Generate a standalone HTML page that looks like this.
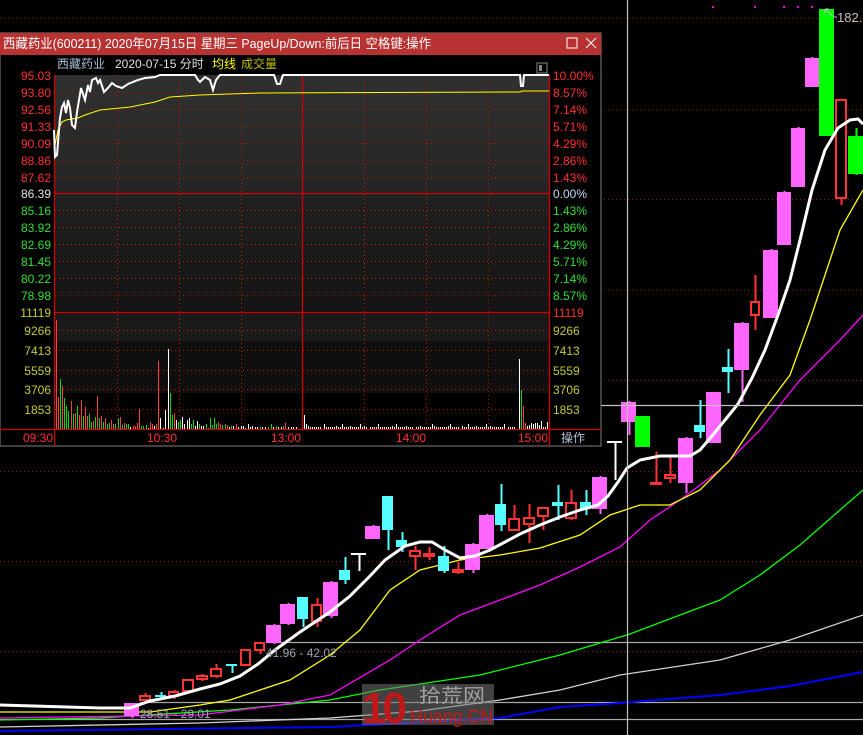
<!DOCTYPE html>
<html><head><meta charset="utf-8">
<style>
html,body{margin:0;padding:0;background:#000;width:863px;height:735px;overflow:hidden}
svg{display:block;font-family:"Liberation Sans","Noto Sans CJK SC",sans-serif}
</style></head><body>
<svg id="s" width="863" height="735" viewBox="0 0 863 735" xmlns="http://www.w3.org/2000/svg">
<rect width="863" height="735" fill="#000"/>
<g id="grid" stroke="#8a1a1a" stroke-width="1" stroke-dasharray="1,3">
<line x1="0" y1="18.5" x2="863" y2="18.5"/><line x1="0" y1="109.5" x2="863" y2="109.5"/>
<line x1="0" y1="199.5" x2="863" y2="199.5"/><line x1="0" y1="290.5" x2="863" y2="290.5"/>
<line x1="0" y1="380.5" x2="863" y2="380.5"/><line x1="0" y1="471.5" x2="863" y2="471.5"/>
<line x1="0" y1="561.5" x2="863" y2="561.5"/><line x1="0" y1="651.5" x2="863" y2="651.5"/>
</g>
<g fill="#ff00ff"><rect x="712" y="6" width="2" height="2"/><rect x="754" y="6" width="2" height="2"/><rect x="783" y="6" width="2" height="2"/><rect x="797" y="6" width="2" height="2"/><rect x="811" y="6" width="2" height="2"/></g>
<g stroke="#a8a8a8" stroke-width="1.2">
<line x1="266" y1="642.5" x2="863" y2="642.5"/>
<line x1="140" y1="702.5" x2="863" y2="702.5"/>
<line x1="0" y1="719.5" x2="863" y2="719.5"/>
</g>
<g fill="none" stroke-width="1.3">
<polyline stroke="#0000ff" stroke-width="2" points="0,731 330,727 500,718 560,707 620,703 720,695 790,686 863,672"/>
<polyline stroke="#d0d0d0" points="0,727 200,723 330,718 420,711 500,700 560,690 620,675 720,660 790,640 863,615"/>
<polyline stroke="#00ff00" points="0,720 100,718 230,710 330,700 380,690 480,675 560,655 630,634 680,615 720,600 760,575 800,545 840,510 863,490"/>
<polyline stroke="#ff00ff" points="0,718 200,715 280,705 330,695 390,660 420,640 460,615 500,600 540,585 580,567 620,547 650,520 680,500 720,470 760,430 800,380 840,340 863,315"/>
<polyline stroke="#ffff00" points="0,712 150,712 200,705 230,700 260,690 290,680 330,655 360,630 390,590 420,570 460,560 500,555 540,548 580,535 610,515 640,505 670,505 700,490 730,460 760,415 790,375 810,320 820,290 840,230 863,190"/>
</g>
<g id="candles"></g>
<polyline fill="none" stroke="#fff" stroke-width="3" points="0,705 100,708 130,708 150,701 175,696 200,689 220,684 240,676 258,664 275,650 300,632 330,612 350,596 370,576 385,560 405,546 420,542 432,542 445,550 460,558 475,556 490,550 505,542 520,534 540,525 560,517 580,510 598,505 608,496 618,482 627,468 640,460 660,456 690,456 700,450 712,436 725,420 738,404 752,378 765,350 778,315 790,280 800,240 812,190 825,150 838,128 850,120 858,119 863,124"/>
<text x="266" y="657" font-size="12" fill="#9aa5b5">41.96 - 42.02</text>
<text x="140" y="718" font-size="12" fill="#9aa5b5">28.51 - 29.01</text>
<text x="837" y="22" font-size="13" fill="#c0c0c0">182.</text>
<path d="M825,9 l4,0 M825,9 l0,4 M825,9 l9,8 l3,0" stroke="#c0c0c0" fill="none"/>
<line x1="627.5" y1="0" x2="627.5" y2="735" stroke="#c0c0c0" stroke-width="1.2"/>
<line x1="600" y1="405.5" x2="863" y2="405.5" stroke="#c0c0c0" stroke-width="1.2"/>
<g>
<rect x="362" y="684" width="132" height="41" fill="#777" opacity="0.55"/>
<text x="362" y="723" font-size="44" font-weight="bold" fill="#c01818" letter-spacing="-4">10</text>
<text x="419" y="702" font-size="19" fill="#a0a0a0" textLength="66" lengthAdjust="spacingAndGlyphs">拾荒网</text>
<text x="410" y="723" font-size="19" fill="#c01818" textLength="83" lengthAdjust="spacingAndGlyphs">Huang.CN</text>
</g>
<rect x="0" y="33" width="601" height="413" fill="#000" stroke="#808080"/>
<rect x="0" y="33" width="601" height="22" fill="#b83232"/>
<text x="3" y="48" font-size="13" fill="#fff" textLength="428" lengthAdjust="spacingAndGlyphs">西藏药业(600211) 2020年07月15日 星期三 PageUp/Down:前后日 空格键:操作</text>
<rect x="567" y="38" width="10" height="10" fill="none" stroke="#fff"/>
<path d="M586,38 l10,10 M596,38 l-10,10" stroke="#fff"/>
<defs>
<linearGradient id="pg" x1="0" y1="0" x2="0" y2="1">
<stop offset="0" stop-color="#303030"/><stop offset="0.45" stop-color="#262626"/><stop offset="0.55" stop-color="#1f1f1f"/><stop offset="1" stop-color="#141414"/>
</linearGradient>
</defs>
<rect x="55" y="75" width="494" height="237" fill="url(#pg)"/>
<rect x="55" y="312" width="494" height="29" fill="#1a1a1a"/>
<rect x="55" y="341" width="494" height="52" fill="#0f0f0f"/>
<text x="57" y="68" font-size="12" fill="#a8c0d8">西藏药业</text>
<text x="115" y="68" font-size="12" fill="#e0e0e0">2020-07-15 分时</text>
<text x="212" y="68" font-size="12" fill="#ffff00">均线</text>
<text x="241" y="68" font-size="12" fill="#c0c000">成交量</text>
<rect x="537" y="63" width="10" height="10" fill="none" stroke="#888"/><rect x="539" y="65" width="3" height="6" fill="#888"/>
<g stroke="#b00000" stroke-dasharray="1,3">
<line x1="55" y1="92.5" x2="549" y2="92.5"/><line x1="55" y1="109.5" x2="549" y2="109.5"/><line x1="55" y1="126.5" x2="549" y2="126.5"/>
<line x1="55" y1="143.5" x2="549" y2="143.5"/><line x1="55" y1="160.5" x2="549" y2="160.5"/><line x1="55" y1="177.5" x2="549" y2="177.5"/>
<line x1="55" y1="210.5" x2="549" y2="210.5"/><line x1="55" y1="227.5" x2="549" y2="227.5"/><line x1="55" y1="244.5" x2="549" y2="244.5"/>
<line x1="55" y1="261.5" x2="549" y2="261.5"/><line x1="55" y1="278.5" x2="549" y2="278.5"/><line x1="55" y1="295.5" x2="549" y2="295.5"/>
<line x1="55" y1="330.5" x2="549" y2="330.5"/><line x1="55" y1="350.5" x2="549" y2="350.5"/><line x1="55" y1="370.5" x2="549" y2="370.5"/>
<line x1="55" y1="389.5" x2="549" y2="389.5"/><line x1="55" y1="409.5" x2="549" y2="409.5"/>
<line x1="117.5" y1="75" x2="117.5" y2="429"/><line x1="179.5" y1="75" x2="179.5" y2="429"/><line x1="241.5" y1="75" x2="241.5" y2="429"/>
<line x1="364.5" y1="75" x2="364.5" y2="429"/><line x1="426.5" y1="75" x2="426.5" y2="429"/><line x1="488.5" y1="75" x2="488.5" y2="429"/>
</g>
<g id="vol"></g>
<g stroke="#d00000" stroke-width="1.3">
<line x1="54.5" y1="75" x2="54.5" y2="446"/><line x1="549.5" y1="75" x2="549.5" y2="446"/>
<line x1="55" y1="193.5" x2="549" y2="193.5"/><line x1="55" y1="312.5" x2="549" y2="312.5"/>
<line x1="302.5" y1="75" x2="302.5" y2="429"/><line x1="0" y1="429.5" x2="601" y2="429.5"/>
</g>
<polyline fill="none" stroke="#ffff00" stroke-width="1" points="55,145 58,130 62,122 66,120 78,118 85,115 100,110 130,107 155,102 170,97 200,95 260,93 520,92 522,91 549,91"/>
<polyline fill="none" stroke="#fff" stroke-width="2" points="54,130 55,157 57,155 60,118 62,107 64,103 66,113 68,100 70,108 72,125 75,128 77,112 79,100 81,88 83,94 85,100 88,85 90,92 92,80 96,78 98,83 100,80 104,92 108,88 112,83 116,86 122,88 128,84 138,80 145,78 155,77 160,75 195,75 198,80 200,82 205,77 210,80 213,90 216,80 220,75 274,75 277,84 280,84 283,75 520,75 521,86 523,86 524,75 549,75"/>
<g font-size="12" text-anchor="end">
<text x="51" y="80" fill="#ff3030">95.03</text><text x="51" y="97" fill="#ff3030">93.80</text><text x="51" y="114" fill="#ff3030">92.56</text>
<text x="51" y="131" fill="#ff3030">91.33</text><text x="51" y="148" fill="#ff3030">90.09</text><text x="51" y="165" fill="#ff3030">88.86</text>
<text x="51" y="182" fill="#ff3030">87.62</text><text x="51" y="198" fill="#e0e0e0">86.39</text><text x="51" y="215" fill="#30e030">85.16</text>
<text x="51" y="232" fill="#30e030">83.92</text><text x="51" y="249" fill="#30e030">82.69</text><text x="51" y="266" fill="#30e030">81.45</text>
<text x="51" y="283" fill="#30e030">80.22</text><text x="51" y="300" fill="#30e030">78.98</text>
<text x="51" y="317" fill="#c8c832">11119</text><text x="51" y="335" fill="#c8c832">9266</text><text x="51" y="355" fill="#c8c832">7413</text>
<text x="51" y="375" fill="#c8c832">5559</text><text x="51" y="394" fill="#c8c832">3706</text><text x="51" y="414" fill="#c8c832">1853</text>
</g>
<g font-size="12">
<text x="553" y="80" fill="#ff3030">10.00%</text><text x="553" y="97" fill="#ff3030">8.57%</text><text x="553" y="114" fill="#ff3030">7.14%</text>
<text x="553" y="131" fill="#ff3030">5.71%</text><text x="553" y="148" fill="#ff3030">4.29%</text><text x="553" y="165" fill="#ff3030">2.86%</text>
<text x="553" y="182" fill="#ff3030">1.43%</text><text x="553" y="198" fill="#c0d8f0">0.00%</text><text x="553" y="215" fill="#30e030">1.43%</text>
<text x="553" y="232" fill="#30e030">2.86%</text><text x="553" y="249" fill="#30e030">4.29%</text><text x="553" y="266" fill="#30e030">5.71%</text>
<text x="553" y="283" fill="#30e030">7.14%</text><text x="553" y="300" fill="#30e030">8.57%</text>
<text x="553" y="317" fill="#ff3030">11119</text><text x="553" y="335" fill="#c8c832">9266</text><text x="553" y="355" fill="#c8c832">7413</text>
<text x="553" y="375" fill="#c8c832">5559</text><text x="553" y="394" fill="#c8c832">3706</text><text x="553" y="414" fill="#c8c832">1853</text>
<text x="561" y="442" fill="#b0c0d8">操作</text>
</g>
<g font-size="12" fill="#ff3030">
<text x="23" y="442">09:30</text><text x="147" y="442">10:30</text><text x="271" y="442">13:00</text><text x="396" y="442">14:00</text><text x="518" y="442">15:00</text>
</g>
</svg>
<script>
var NS="http://www.w3.org/2000/svg";
function el(p,t,a){var e=document.createElementNS(NS,t);for(var k in a)e.setAttribute(k,a[k]);p.appendChild(e);return e;}
var C={p:"#ff66ff",c:"#55ffff",r:"#ff3333",g:"#00ff00",w:"#ffffff"};
var cs=[
[124,139,703,716,703,718,"p",0],[139,151,695,701,693,703,"r",1],[155,166,695,697,692,700,"c",0],[168,179,691,697,690,699,"r",1],
[182,194,679,692,679,692,"r",1],[196,208,675,680,674,681,"r",1],[210,222,668,677,664,678,"r",1],[226,237,664,666,664,673,"c",0],
[240,251,649,666,649,666,"r",1],[254,265,642,651,642,654,"r",1],[266,281,625,643,624,644,"p",0],[280,295,604,624,603,625,"p",0],
[297,308,597,619,597,627,"c",0],[311,322,604,622,598,627,"r",1],[323,338,582,616,581,618,"p",0],[339,350,570,580,557,584,"c",0],
[351,366,553,555,553,571,"w",0],[365,380,526,539,525,539,"p",0],[382,393,496,530,496,550,"c",0],[396,407,540,547,532,552,"c",0],
[409,421,550,557,546,570,"r",1],[423,435,553,557,547,560,"r",0],[438,449,556,571,546,573,"c",0],[452,464,569,573,562,574,"r",1],
[465,480,544,570,543,573,"p",0],[479,494,515,549,514,549,"p",0],[495,506,504,525,484,531,"c",0],[508,520,518,531,505,531,"r",1],
[523,535,517,525,504,543,"r",1],[537,549,507,517,507,530,"r",1],[552,563,502,506,485,520,"c",0],[565,577,502,519,490,520,"r",1],
[580,591,502,509,490,515,"c",0],[592,607,477,509,476,514,"p",0],[607,622,441,443,441,480,"w",0],[621,636,402,422,401,435,"p",0],
[635,650,416,447,416,447,"g",0],[650,662,482,485,452,485,"r",0],[664,676,474,479,457,483,"r",1],[678,693,438,483,437,493,"p",0],
[694,705,425,432,400,438,"c",0],[706,721,392,443,392,443,"p",0],[722,733,367,372,349,393,"c",0],[734,749,323,370,322,402,"p",0],
[750,760,301,316,275,330,"r",1],[763,778,250,318,249,318,"p",0],[777,791,192,245,191,245,"p",0],[791,805,128,187,127,187,"p",0],
[805,819,58,87,57,87,"p",0],[819,834,9,136,9,136,"g",0],[835,847,99,199,99,205,"r",1],[848,863,136,174,128,175,"g",0]
];
var g=document.getElementById("candles");
cs.forEach(function(c){var col=C[c[6]],xm=Math.round((c[0]+c[1])/2)+0.5;
el(g,"line",{x1:xm,x2:xm,y1:c[4],y2:c[5],stroke:col,"stroke-width":2});
if(c[7])el(g,"rect",{x:c[0]+1,y:c[2]+1,width:c[1]-c[0]-2,height:Math.max(c[3]-c[2]-2,1),fill:"#000",stroke:col,"stroke-width":2});
else el(g,"rect",{x:c[0],y:c[2],width:c[1]-c[0],height:Math.max(c[3]-c[2],2),fill:col});});
var v=document.getElementById("vol");
var bars=[[56,320,"r"],[58,397,"r"],[60,379,"g"],[62,386,"r"],[64,398,"g"],[66,406,"g"],[68,411,"g"],[71,401,"r"],[73,414,"g"],[75,413,"r"],[77,406,"g"],[79,415,"r"],[81,400,"r"],[83,416,"g"],[85,407,"r"],[87,416,"r"],[89,414,"g"],[91,422,"g"],[93,421,"r"],[95,417,"g"],[97,396,"r"],[99,418,"g"],[101,416,"r"],[103,422,"g"],[105,418,"r"],[107,424,"g"],[109,423,"g"],[111,420,"r"],[113,424,"r"],[115,424,"g"],[118,418,"g"],[120,417,"r"],[122,425,"g"],[124,423,"r"],[126,424,"g"],[128,424,"g"],[130,427,"w"],[133,426,"r"],[135,426,"r"],[137,423,"r"],[139,409,"r"],[141,426,"g"],[143,426,"g"],[146,425,"g"],[148,428,"w"],[150,422,"r"],[152,424,"r"],[154,426,"w"],[156,424,"r"],[158,361,"r"],[160,418,"w"],[163,428,"w"],[165,410,"w"],[168,349,"w"],[170,393,"g"],[172,415,"g"],[174,413,"r"],[176,420,"w"],[178,422,"g"],[180,420,"g"],[182,417,"w"],[184,424,"w"],[187,420,"w"],[189,418,"w"],[191,424,"g"],[193,420,"g"],[195,426,"w"],[197,421,"w"],[199,424,"g"],[201,426,"w"],[203,426,"w"],[206,424,"g"],[208,428,"r"],[210,418,"g"],[212,425,"g"],[214,418,"g"],[216,424,"g"],[218,422,"r"],[220,424,"r"],[222,425,"g"],[225,424,"g"],[227,425,"r"],[229,427,"w"],[231,426,"g"],[233,426,"w"],[236,424,"r"],[238,427,"w"],[241,426,"w"],[243,426,"w"],[245,428,"w"],[248,424,"w"],[250,427,"w"],[252,426,"w"],[255,427,"w"],[257,427,"w"],[260,427,"g"],[262,427,"w"],[265,427,"w"],[268,427,"g"],[271,424,"g"],[273,427,"w"],[276,426,"g"],[278,427,"w"],[281,427,"w"],[283,426,"g"],[285,423,"r"],[288,427,"w"],[291,427,"w"],[293,427,"w"],[296,427,"w"],[304,415,"w"]];
for(var x=306;x<515;x+=2){var h=(x%9==0)?5:(x%7==0?3:2);if(x%23==0)continue;bars.push([x,429-h,"w"]);}
bars=bars.concat([[519,359,"w"],[521,390,"g"],[523,406,"r"],[525,423,"r"],[527,426,"w"],[529,425,"w"],[531,423,"w"],[533,424,"w"],[535,423,"w"],[537,423,"w"],[539,425,"w"],[541,421,"w"],[543,427,"w"],[545,427,"w"],[547,422,"w"]]);
bars.forEach(function(b){el(v,"rect",{x:b[0],y:b[1],width:1,height:429-b[1],fill:b[2]=="r"?"#ff4040":b[2]=="g"?"#00e000":"#ffffff"});});
</script>
</body></html>
